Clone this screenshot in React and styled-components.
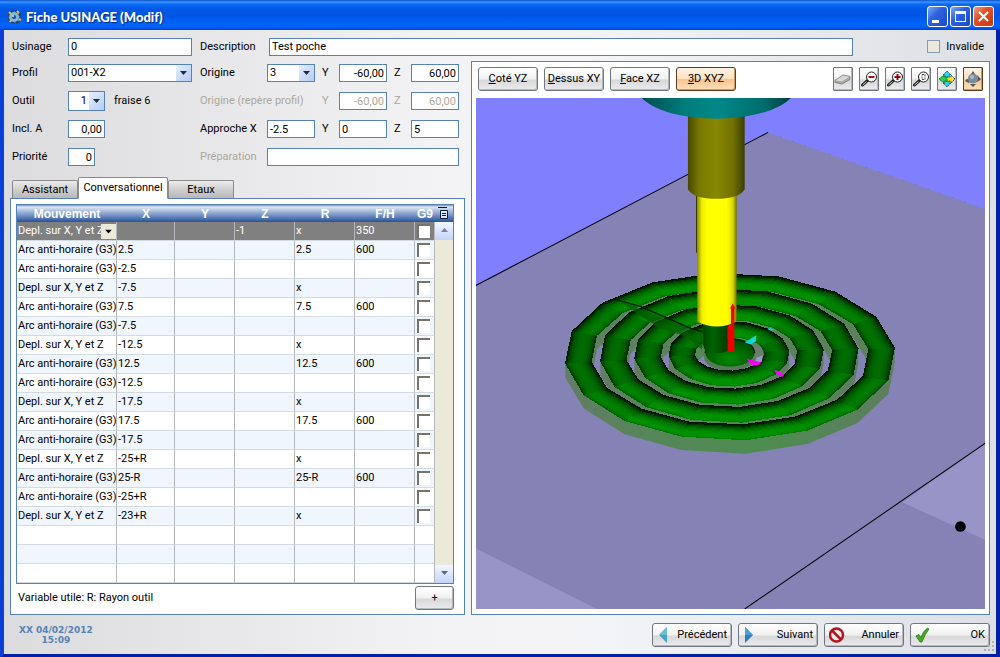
import React, { useState } from 'react'
import styled, { createGlobalStyle, css } from 'styled-components'

const BORDER = '#5583b5'

const GlobalStyle = createGlobalStyle`
  *, *::before, *::after { box-sizing: border-box; }
  body {
    margin: 0;
    background: #0831d9;
    color: #000;
    font: 11px/14px Roboto, "Liberation Sans", sans-serif;
  }
  button, input, select {
    font: inherit;
    color: inherit;
    margin: 0;
  }
`

const Window = styled.div`
  display: flex;
  flex-direction: column;
  min-height: 100vh;
  border: solid #0a3fd8;
  border-width: 0 4px 4px;
  border-color: #0a3fd8 #0020a8 #0020a8 #0a3fd8;
`

const TitleBar = styled.header`
  display: flex;
  align-items: center;
  gap: 4px;
  height: 30px;
  margin: 0 -4px;
  padding: 3px 6px 0 7px;
  background: linear-gradient(#0a50c8 0, #3d95ff 2px, #0a6cf5 4px, #0058e6 9px, #0055e5 16px, #0066ff 25px, #005af0 28px, #003fc8 30px);
  & h1 {
    flex: 1;
    margin: 0;
    color: #fff;
    font: 900 13px/18px Lato, "Open Sans", sans-serif;
    text-shadow: 1px 1px 1px #002a80;
  }
`

const WindowControls = styled.div`
  display: flex;
  gap: 2px;
`

const ControlButton = styled.button`
  display: grid;
  place-items: center;
  width: 21px;
  height: 21px;
  padding: 0;
  border: 1px solid #fff;
  border-radius: 3px;
  background: ${ ({ $close }) => $close
    ? 'linear-gradient(135deg, #f0a088, #e0502a 40%, #c8380c)'
    : 'linear-gradient(135deg, #7fa8f5, #2f62e0 40%, #1b48c8)' };
`

const Content = styled.main`
  flex: 1;
  display: flex;
  flex-direction: column;
  padding: 4px 6px 0;
  background: linear-gradient(90deg, #dcdcde, #f3f3f5 44%, #f3f4f7 60%, #dcdfe4);
`

const TopRow = styled.div`
  display: grid;
  grid-template-columns: 56px 124px 8px 69px 1fr 137px;
  align-items: center;
  height: 25px;
  padding-left: 2px;
`

const Invalid = styled.label`
  display: flex;
  align-items: center;
  justify-content: flex-end;
  gap: 6px;
  padding-right: 6px;
  & input {
    appearance: none;
    width: 13px;
    height: 13px;
    border: 1px solid #7f9db9;
    background: #ece9d8;
  }
`

const Columns = styled.div`
  flex: 1;
  display: grid;
  grid-template-columns: 455px minmax(0, 1fr);
  gap: 6px;
`

const LeftColumn = styled.div`
  display: flex;
  flex-direction: column;
`

const FormRow = styled.div`
  display: grid;
  grid-template-columns: 56px 132px 67px 48px 24px 48px 24px 48px;
  align-items: center;
  height: 28px;
  padding-left: 2px;
`

const FieldGroup = styled.div`
  display: flex;
  align-items: center;
  gap: 9px;
`

const Label = styled.label`
  white-space: nowrap;
  padding-left: ${ ({ $axis }) => ($axis ? 7 : 0) }px;
  color: ${ ({ $off }) => ($off ? '#aca899' : 'inherit') };
  grid-column: ${ ({ $span }) => ($span ? `span ${ $span }` : 'auto') };
`

const fieldBox = css`
  width: ${ ({ $w }) => ($w ? `${ $w }px` : '100%') };
  min-width: 0;
  height: 18px;
  border: 1px solid ${ BORDER };
  border-radius: 0;
  background: #fff;
`

const Field = styled.input`
  ${ fieldBox }
  padding: 0 2px;
  text-align: ${ ({ $right }) => ($right ? 'right' : 'left') };
  grid-column: ${ ({ $span }) => ($span ? `span ${ $span }` : 'auto') };
  &:disabled { color: #aca899; }
`

const SelectBox = styled.span`
  ${ fieldBox }
  display: flex;
  height: ${ ({ $tall }) => ($tall ? 20 : 18) }px;
  & select {
    flex: 1;
    min-width: 0;
    appearance: none;
    border: 0;
    padding: 0 2px;
    background: none;
    text-align: ${ ({ $right }) => ($right ? 'right' : 'left') };
  }
  & svg {
    flex: none;
    width: 15px;
    height: 100%;
    background: linear-gradient(135deg, #e6effe, #b4ccf6);
  }
`

const Tabs = styled.div`
  display: flex;
  align-items: flex-end;
  height: 28px;
  padding-left: 2px;
  margin-bottom: -1px;
`

const Tab = styled.button`
  position: relative;
  width: ${ ({ $active }) => ($active ? 90 : 66) }px;
  height: ${ ({ $active }) => ($active ? 22 : 19) }px;
  padding: 0;
  border: 1px solid #8a8a8a;
  border-bottom-color: ${ ({ $active }) => ($active ? '#fff' : BORDER) };
  border-radius: 2px 2px 0 0;
  background: ${ ({ $active }) => ($active ? '#fff' : 'linear-gradient(#ececec, #cfcfcf 50%, #b8b8b8)') };
`

const Panel = styled.section`
  flex: 1;
  display: flex;
  flex-direction: column;
  border: 1px solid ${ BORDER };
  background: #fff;
`

const MovesPanel = styled(Panel)`
  padding: 5px 10px 4px 5px;
`

const TableFrame = styled.div`
  display: flex;
  border: 1px solid ${ BORDER };
`

const headGradient = 'linear-gradient(#7590bd, #dfe7f4 2px, #a9bddc 6px, #5f82ba 12px, #2a5298)'

const MoveTable = styled.table`
  flex: 1;
  width: 100%;
  min-width: 0;
  table-layout: fixed;
  border-collapse: separate;
  border-spacing: 0;
  & th {
    height: 17px;
    padding: 0;
    color: #fff;
    font: bold 12px/14px "Liberation Sans", sans-serif;
  }
  & thead { background: ${ headGradient }; }
  & td {
    height: 19px;
    padding: 0 0 0 1px;
    border: solid #d3dbe2;
    border-width: 0 1px 1px 0;
    border-right-color: #b4b8bd;
    white-space: nowrap;
  }
  & tbody tr:nth-child(even) { background: #f0f6fd; }
  & tbody tr:first-child { background: #808080; color: #fff; }
`

const MoveSelect = styled.span`
  display: flex;
  & select {
    flex: 1;
    min-width: 0;
    appearance: none;
    border: 0;
    padding: 0;
    background: none;
    white-space: nowrap;
  }
  & svg {
    flex: none;
    width: 15px;
    height: 15px;
    background: #ece9d8;
  }
`

const FlagBox = styled.input`
  appearance: none;
  display: block;
  width: 13px;
  height: 14px;
  margin: 0 0 0 1px;
  border: solid #77736a;
  border-width: 2px 0 0 2px;
  background: #fff;
`

const ScrollBar = styled.div`
  flex: none;
  display: flex;
  flex-direction: column;
  width: 18px;
  background: #ece9d8;
  & > svg {
    height: 17px;
    background: ${ headGradient };
  }
  & > button {
    height: 18px;
    padding: 0;
    border: 0;
    background: linear-gradient(#f4f7ff, #c3d3fb);
  }
  & > button:last-child { margin-top: auto; }
`

const PanelFoot = styled.div`
  display: flex;
  align-items: center;
  justify-content: space-between;
  padding: 2px 0 0 2px;
`

const PushButton = styled.button`
  display: inline-flex;
  align-items: center;
  justify-content: ${ ({ $icon }) => ($icon ? 'space-between' : 'center') };
  width: ${ ({ $w }) => $w || 60 }px;
  height: 24px;
  padding: 0 4px;
  border: 1px solid ${ ({ $active }) => ($active ? '#5a3c1e' : '#6f7880') };
  border-radius: 3px;
  white-space: nowrap;
  background: ${ ({ $active }) => $active
    ? 'linear-gradient(#fff4e6, #fddfbe 48%, #f8c48e 52%, #fde0bd)'
    : 'linear-gradient(#fff, #f2f2f2 48%, #d8d8da 56%, #ececee)' };
  box-shadow: inset -1px -1px 0 ${ ({ $active }) => ($active ? '#c89a6a' : '#b5b8bc') };
`

const ToolButton = styled(PushButton)`
  width: 20px;
  padding: 0;
  border-radius: 1px;
`

const ViewPanel = styled(Panel)`
  margin-top: 2px;
  padding: 5px 4px;
`

const ViewBar = styled.div`
  display: flex;
  flex-wrap: wrap;
  gap: 6px;
  padding: 0 2px 7px;
`

const Spacer = styled.span`
  flex: 1;
`

const Scene = styled.svg`
  flex: 1;
  display: block;
  width: 100%;
  min-height: 0;
`

const Footer = styled.footer`
  display: flex;
  align-items: center;
  justify-content: flex-end;
  gap: 6px;
  height: 39px;
  & time {
    margin: 0 auto 0 9px;
    color: #5583b5;
    text-align: center;
    font: bold 9px/10px "DejaVu Sans", sans-serif;
  }
`

const Grip = styled.svg`
  position: absolute;
  right: 5px;
  bottom: 5px;
`

const ARC = 'Arc anti-horaire (G3)'
const LINE = 'Depl. sur X, Y et Z'

// mouvement, X, Y, Z, R, F/H
const MOVES = [
  [LINE, '', '', '-1', 'x', '350'],
  [ARC, '2.5', '', '', '2.5', '600'],
  [ARC, '-2.5', '', '', '', ''],
  [LINE, '-7.5', '', '', 'x', ''],
  [ARC, '7.5', '', '', '7.5', '600'],
  [ARC, '-7.5', '', '', '', ''],
  [LINE, '-12.5', '', '', 'x', ''],
  [ARC, '12.5', '', '', '12.5', '600'],
  [ARC, '-12.5', '', '', '', ''],
  [LINE, '-17.5', '', '', 'x', ''],
  [ARC, '17.5', '', '', '17.5', '600'],
  [ARC, '-17.5', '', '', '', ''],
  [LINE, '-25+R', '', '', 'x', ''],
  [ARC, '25-R', '', '', '25-R', '600'],
  [ARC, '-25+R', '', '', '', ''],
  [LINE, '-23+R', '', '', 'x', ''],
]
const EMPTY_ROWS = [0, 1, 2]

const Arrow = ({ up, color = '#1c2b45' }) => (
  <svg width="15" height="16" viewBox="0 0 15 16" aria-hidden="true">
    <path d={ up ? 'M4 10h7L7.5 6z' : 'M4 6h7L7.500 10z' } fill={ color } />
  </svg>
)

const Select = ({ id, value, ...rest }) => (
  <SelectBox { ...rest }>
    <select id={ id } defaultValue={ value }><option>{ value }</option></select>
    <Arrow />
  </SelectBox>
)

const GearIcon = () => (
  <svg width="15" height="16" viewBox="0 0 15 16" aria-hidden="true">
    <circle cx="7.500" cy="8" r="5.500" fill="#6fb2d8" stroke="#33424e" strokeWidth="3" strokeDasharray="3 1.300" />
    <circle cx="7" cy="8" r="5" fill="#7ab8dc" />
    <path d="M2 3l2 2M10 2l2 2M12 10l2 1M3 13l1-2" stroke="#d8b860" strokeWidth="2" />
    <circle cx="7" cy="8" r="2" fill="#1d4f80" />
    <circle cx="6" cy="7" r="1" fill="#cfeaf8" />
  </svg>
)

const Lens = ({ children }) => (
  <svg width="18" height="18" viewBox="0 0 18 18" aria-hidden="true">
    <path d="M2.500 15L7.500 10.500" stroke="#111" strokeWidth="3" strokeLinecap="round" />
    <path d="M2.500 15L6.500 11.500" stroke="#eee" strokeWidth="1" />
    <circle cx="11.500" cy="7" r="5" fill="#fff" stroke="#222" />
    { children }
  </svg>
)

const EraserIcon = () => (
  <svg width="18" height="18" viewBox="0 0 18 18" aria-hidden="true">
    <path d="M1 10.500L9 5l7 1.500v3L8 14l-7-1.500z" fill="#a8a8a8" stroke="#777" strokeWidth=".8" />
    <path d="M1.500 10.500L9 5.500l6.500 1.200L8 11.500z" fill="#d6d6d6" />
  </svg>
)

const MoveIcon = () => (
  <svg width="18" height="18" viewBox="0 0 18 18" aria-hidden="true">
    <g stroke="#163a3a" strokeWidth=".8" strokeDasharray="1.500 .7">
      <path d="M9 1l4 4h-2v4H7V5H5z" fill="#20d8f0" />
      <path d="M9 17l-4-4h2V9h4v4h2z" fill="#20d8e8" />
      <path d="M1 9l5-4v2h4v4H6v2z" fill="#18d838" />
      <path d="M17 9l-4-4v2H9v4h4v2z" fill="#f8e020" />
    </g>
  </svg>
)

const OrbitIcon = () => (
  <svg width="18" height="18" viewBox="0 0 18 18" aria-hidden="true">
    <path d="M9 1l2 3H7zM9 17l-3-3h6zM1 11l4-3v5zM17 9l-4-4v7z" fill="#4f5c68" />
    <path d="M2 10q7 4 14-1" fill="none" stroke="#4f5c68" strokeWidth="2" />
    <circle cx="9" cy="8.500" r="5" fill="#7c8d9c" />
    <circle cx="8" cy="7" r="2" fill="#a9bac8" />
  </svg>
)

const TriangleIcon = ({ right }) => (
  <svg width="18" height="18" viewBox="0 0 18 18" aria-hidden="true">
    <path d={ right ? 'M2 1v16l8-8z' : 'M10 1v16L2 9z' } fill={ right ? '#2f7fb8' : '#45a3c8' } />
    <path d={ right ? 'M2 1v8h8z' : 'M10 1v8H2z' } fill={ right ? '#4d9fd4' : '#69bfd8' } />
  </svg>
)

const StopIcon = () => (
  <svg width="18" height="18" viewBox="0 0 18 18" aria-hidden="true">
    <circle cx="7.500" cy="9" r="6.500" fill="#f8eaea" stroke="#b3161c" strokeWidth="2.500" />
    <path d="M3 4.500l9 9" stroke="#b3161c" strokeWidth="2.500" />
  </svg>
)

const CheckIcon = () => (
  <svg width="18" height="18" viewBox="0 0 18 18" aria-hidden="true">
    <path d="M1 10l3-1.500 2 3Q8 5 12.500 2l1.500 1Q10 8 7 16H5z" fill="#4aaa28" stroke="#277a14" strokeWidth=".8" />
  </svg>
)

// Concentric grooves: 16-sided tubes seen in perspective
const SIDES = 16
const START = 84.6
const STRIPS = 14
const RINGS = [
  { cx: 774, cy: 783, rx: 456, ry: 224 },
  { cx: 772, cy: 781, rx: 349, ry: 175 },
  { cx: 771, cy: 778, rx: 245, ry: 125 },
  { cx: 771, cy: 777, rx: 142, ry: 73 },
]

const angleAt = k => ((START + (k * 360) / SIDES) * Math.PI) / 180

const pointAt = (ring, t, k, dy = 0) => {
  const a = angleAt(k)
  const s = Math.sin(a)
  // the near half is stretched a little by the perspective
  const ry = ring.ry * (s > 0 ? 1.03 : 1) + 24 * t
  const x = ring.cx + (ring.rx + 40 * t) * Math.cos(a)
  return `${ Math.round(x) },${ Math.round(ring.cy + ry * s + dy) }`
}

const outline = (ring, t, dy) =>
  `M${ Array.from({ length: SIDES }, (_, k) => pointAt(ring, t, k, dy)).join('L') }Z`

const tubeColor = (t, k) => {
  const s = Math.sin(angleAt(k + 0.5))
  const light = Math.sqrt(Math.max(0, 1 - t * t)) * 105 + t * s * 72 + Math.abs(s) * 25
  return `rgb(0,${ Math.round(Math.max(16, Math.min(144, light))) },0)`
}

const Walls = ({ ring }) => [40, 27, 14].map(dy => (
  <path key={ dy } d={ outline(ring, 1, dy) + outline(ring, -1, dy) } fillRule="evenodd" fill="url(#wall)" />
))

// Each strip runs on to the outer edge and the next one covers it, so no seam shows
const Tube = ({ ring }) => {
  const quads = []
  for (let k = 0; k < SIDES; k++) {
    for (let i = 0; i < STRIPS; i++) {
      const t0 = -1 + (2 * i) / STRIPS
      const fill = tubeColor(t0 + 1 / STRIPS, k)
      quads.push(
        <polygon
          key={ `${ k }-${ i }` }
          points={ [pointAt(ring, t0, k), pointAt(ring, 1, k), pointAt(ring, 1, k + 1), pointAt(ring, t0, k + 1)].join(' ') }
          fill={ fill }
        />
      )
    }
  }
  return <g shapeRendering="crispEdges">{ quads }</g>
}

const Stops = ({ id, colors }) => (
  <linearGradient id={ id }>
    { colors.map(([offset, color]) => <stop key={ offset } offset={ offset } stopColor={ color } />) }
  </linearGradient>
)

const MillingScene = () => (
  <Scene viewBox="12 12 1527 1530" preserveAspectRatio="xMidYMid slice" role="img" aria-label="3D XYZ">
    <defs>
      <Stops id="teal" colors={ [[0, '#004848'], [0.3, '#007c7c'], [0.5, '#008888'], [0.8, '#006c6c'], [1, '#003838']] } />
      <Stops id="olive" colors={ [[0, '#484800'], [0.2, '#787800'], [0.5, '#888800'], [0.8, '#707000'], [1, '#3c3c00']] } />
      <Stops id="yellow" colors={ [[0, '#909000'], [0.12, '#f0f000'], [0.25, '#ffff00'], [0.75, '#ffff00'], [0.9, '#d8d800'], [1, '#707000']] } />
      <Stops id="plunge" colors={ [[0, '#004400'], [0.4, '#006400'], [1, '#003c00']] } />
      <Stops id="wall" colors={ [[0, '#627c64'], [0.25, '#56865a'], [0.6, '#4e8c50'], [1, '#5e7c60']] } />
      <radialGradient id="hub" cx=".5" cy=".7" r=".6">
        <stop offset="0" stopColor="#008c00" />
        <stop offset="1" stopColor="#005000" />
      </radialGradient>
    </defs>
    <rect x="-500" y="-500" width="2600" height="2600" fill="#8080ff" />
    <path d="M12 574L888 115L1539 345V1542H12z" fill="#8583b6" />
    <path d="M12 1360L375 1542H12zM1290 1223L1539 1045V1335z" fill="#9794c8" />
    <path d="M12 574L888 115M818 1542L1539 1045" stroke="#000" strokeWidth="3" />
    <path d="M888 115L1539 345" stroke="#77759e" strokeWidth="3" strokeDasharray="3 36" />

    { RINGS.map(ring => <Walls key={ ring.rx } ring={ ring } />) }
    <ellipse cx="774" cy="786" rx="78" ry="44" fill="#527c54" />
    { RINGS.map(ring => <Tube key={ ring.rx } ring={ ring } />) }
    <path d="M445 620L700 716L690 765L640 725L560 700L500 660z" fill="#005c00" opacity=".7" />
    <path d="M430 615L505 636L580 668L662 704L700 714" fill="none" stroke="#001c00" strokeWidth="4" />
    <path d="M840 742Q872 748 876 780L862 804L842 790z" fill="#66806c" />
    <path d="M853 790l20-8-4 20-18 4z" fill="#9a98cc" />
    <ellipse cx="774" cy="775" rx="74" ry="41" fill="url(#hub)" />
    <path d="M700 775Q705 733 774 734Q840 735 848 775" fill="none" stroke="#002400" strokeWidth="5" />
    <path d="M693 680H767V770Q730 782 700 770L693 750z" fill="url(#plunge)" />

    <path d="M674 300V475" stroke="#303000" strokeWidth="3" />
    <path d="M676 290H794V682Q735 710 676 682z" fill="url(#yellow)" />
    <path d="M648 50H818V285Q800 314 733 314Q666 314 648 285z" fill="url(#olive)" />
    <ellipse cx="733" cy="-20" rx="237" ry="94" fill="url(#teal)" />
    <path d="M767 696L777 690V645L775 640L782 627L789 640L787 645V772H767z" fill="#f00000" />
    <path d="M818 743L852 723V740L835 750zM885 703L895 701L906 707L895 709z" fill="#10d8d8" />
    <path d="M824 793L868 804L858 812L838 813zM907 827L918 829L936 841L930 847L912 838z" fill="#f800f8" />
    <circle cx="1464" cy="1295" r="16" fill="#000" />
  </Scene>
)

export default function App() {
  const [tab, setTab] = useState('Conversationnel')
  const [view, setView] = useState('3D XYZ')

  return (
    <>
      <GlobalStyle />
      <Window>
        <TitleBar>
          <GearIcon />
          <h1>Fiche USINAGE (Modif)</h1>
          <WindowControls>
            <ControlButton aria-label="Réduire">
              <svg width="19" height="19"><path d="M4 13h7v3H4z" fill="#fff" /></svg>
            </ControlButton>
            <ControlButton aria-label="Agrandir">
              <svg width="19" height="19"><path d="M4 4h11v11H4zM5 7v7h9V7z" fill="#fff" fillRule="evenodd" /></svg>
            </ControlButton>
            <ControlButton $close aria-label="Fermer">
              <svg width="19" height="19"><path d="M5 5l9 9M14 5l-9 9" stroke="#fff" strokeWidth="2" /></svg>
            </ControlButton>
          </WindowControls>
        </TitleBar>

        <Content>
          <TopRow>
            <Label htmlFor="usinage">Usinage</Label>
            <Field id="usinage" defaultValue="0" />
            <span />
            <Label htmlFor="description">Description</Label>
            <Field id="description" defaultValue="Test poche" />
            <Invalid><input type="checkbox" />Invalide</Invalid>
          </TopRow>

          <Columns>
            <LeftColumn>
              <FormRow>
                <Label htmlFor="profil">Profil</Label>
                <FieldGroup><Select id="profil" value="001-X2" $w={ 124 } /></FieldGroup>
                <Label htmlFor="origine">Origine</Label>
                <Select id="origine" value="3" />
                <Label $axis htmlFor="origine-y">Y</Label>
                <Field $right id="origine-y" defaultValue="-60,00" />
                <Label $axis htmlFor="origine-z">Z</Label>
                <Field $right id="origine-z" defaultValue="60,00" />
              </FormRow>
              <FormRow>
                <Label htmlFor="outil">Outil</Label>
                <FieldGroup><Select $tall $right id="outil" value="1" $w={ 37 } />fraise 6</FieldGroup>
                <Label $off $span={ 2 }>Origine (repère profil)</Label>
                <Label $axis $off htmlFor="repere-y">Y</Label>
                <Field $right disabled id="repere-y" defaultValue="-60,00" />
                <Label $axis $off htmlFor="repere-z">Z</Label>
                <Field $right disabled id="repere-z" defaultValue="60,00" />
              </FormRow>
              <FormRow>
                <Label htmlFor="incl">Incl. A</Label>
                <FieldGroup><Field $right id="incl" defaultValue="0,00" $w={ 37 } /></FieldGroup>
                <Label htmlFor="approche-x">Approche X</Label>
                <Field id="approche-x" defaultValue="-2.5" />
                <Label $axis htmlFor="approche-y">Y</Label>
                <Field id="approche-y" defaultValue="0" />
                <Label $axis htmlFor="approche-z">Z</Label>
                <Field id="approche-z" defaultValue="5" />
              </FormRow>
              <FormRow>
                <Label htmlFor="priorite">Priorité</Label>
                <FieldGroup><Field $right id="priorite" defaultValue="0" $w={ 27 } /></FieldGroup>
                <Label $off htmlFor="preparation">Préparation</Label>
                <Field disabled $span={ 5 } id="preparation" />
              </FormRow>

              <Tabs role="tablist">
                { ['Assistant', 'Conversationnel', 'Etaux'].map(name => (
                  <Tab key={ name } role="tab" aria-selected={ tab === name } $active={ tab === name } onClick={ () => setTab(name) }>
                    { name }
                  </Tab>
                )) }
              </Tabs>

              <MovesPanel>
                <TableFrame>
                  <MoveTable>
                    <colgroup>
                      <col width="100" />
                      <col width="58" /><col width="60" /><col width="60" /><col width="60" /><col width="60" />
                      <col width="20" />
                    </colgroup>
                    <thead>
                      <tr>
                        { ['Mouvement', 'X', 'Y', 'Z', 'R', 'F/H', 'G9'].map(name => <th key={ name }>{ name }</th>) }
                      </tr>
                    </thead>
                    <tbody>
                      { MOVES.map((cells, row) => (
                        <tr key={ row }>
                          { cells.map((cell, i) => (
                            <td key={ i }>
                              { row === 0 && i === 0 ? (
                                <MoveSelect>
                                  <select aria-label="Mouvement" defaultValue={ cell }>
                                    <option>{ LINE }</option>
                                    <option>{ ARC }</option>
                                  </select>
                                  <Arrow color="#000" />
                                </MoveSelect>
                              ) : cell }
                            </td>
                          )) }
                          <td><FlagBox type="checkbox" aria-label="G9" /></td>
                        </tr>
                      )) }
                      { EMPTY_ROWS.map(row => (
                        <tr key={ row }><td /><td /><td /><td /><td /><td /><td /></tr>
                      )) }
                    </tbody>
                  </MoveTable>
                  <ScrollBar>
                    <svg width="18" height="17" viewBox="0 0 18 17" aria-hidden="true">
                      <path d="M3 2.500h9M5.500 5.500h7v8h-7z" fill="#dfe8f8" stroke="#0a1c40" />
                      <path d="M7 8.500h4M7 10.500h4" stroke="#0a1c40" />
                    </svg>
                    <button aria-label="Monter"><Arrow up color="#7a8290" /></button>
                    <button aria-label="Descendre"><Arrow color="#5a6a88" /></button>
                  </ScrollBar>
                </TableFrame>
                <PanelFoot>
                  <span>Variable utile: R: Rayon outil</span>
                  <PushButton $w={ 39 }>+</PushButton>
                </PanelFoot>
              </MovesPanel>
            </LeftColumn>

            <ViewPanel>
              <ViewBar>
                { ['Coté YZ', 'Dessus XY', 'Face XZ', '3D XYZ'].map(name => (
                  <PushButton key={ name } $active={ view === name } onClick={ () => setView(name) }>
                    <span><u>{ name[0] }</u>{ name.slice(1) }</span>
                  </PushButton>
                )) }
                <Spacer />
                <ToolButton aria-label="Effacer"><EraserIcon /></ToolButton>
                <ToolButton aria-label="Zoom arrière"><Lens><path d="M8.500 7h6" stroke="#b01010" strokeWidth="2" /></Lens></ToolButton>
                <ToolButton aria-label="Zoom avant"><Lens><path d="M8.500 7h6M11.500 4v6" stroke="#900c0c" strokeWidth="2" /></Lens></ToolButton>
                <ToolButton aria-label="Zoom tout"><Lens><path d="M10 4.500h3v5h-3z" fill="none" stroke="#444" strokeDasharray="2 1" /></Lens></ToolButton>
                <ToolButton aria-label="Déplacer"><MoveIcon /></ToolButton>
                <ToolButton $active aria-label="Tourner"><OrbitIcon /></ToolButton>
              </ViewBar>
              <MillingScene />
            </ViewPanel>
          </Columns>

          <Footer>
            <time dateTime="2012-02-04T15:09">XX 04/02/2012<br />15:09</time>
            <PushButton $icon $w={ 80 }><TriangleIcon />Précédent</PushButton>
            <PushButton $icon $w={ 80 }><TriangleIcon right />Suivant</PushButton>
            <PushButton $icon $w={ 80 }><StopIcon />Annuler</PushButton>
            <PushButton $icon $w={ 80 }><CheckIcon />OK</PushButton>
          </Footer>
          <Grip width="12" height="12" viewBox="0 0 12 12" aria-hidden="true">
            <path d="M9 1h2v2h-2zM5 5h2v2h-2zM9 5h2v2h-2zM1 9h2v2h-2zM5 9h2v2h-2zM9 9h2v2h-2z" fill="#b0b0b0" />
          </Grip>
        </Content>
      </Window>
    </>
  )
}
